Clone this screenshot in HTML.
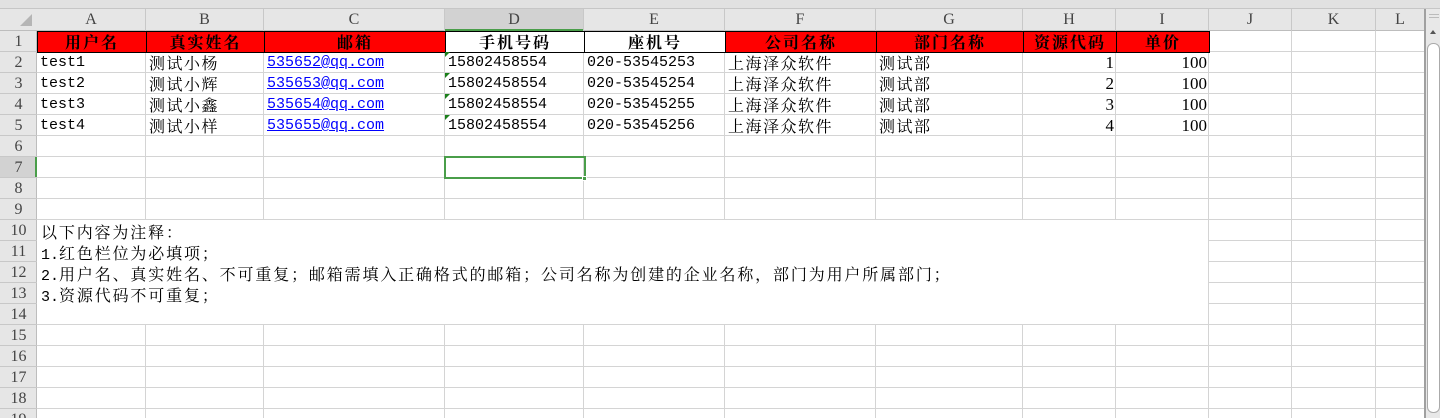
<!DOCTYPE html>
<html><head><meta charset="utf-8">
<style>
body{margin:0;width:1440px;height:418px;overflow:hidden;background:#fff;position:relative;font-family:"Liberation Mono","Noto Serif CJK SC",monospace;font-size:15px;color:#000}
div{position:absolute;box-sizing:border-box}
.t{white-space:nowrap;line-height:21px;height:21px}
.c{font-family:"Noto Serif CJK SC",serif;font-size:16px;letter-spacing:1.5px}
.n .c{letter-spacing:1.85px}
</style></head><body>
<div style="left:0;top:0;width:1440px;height:9px;background:#e1e1e1;border-bottom:1px solid #c6c6c6"></div>
<div id="g" style="left:0;top:0;width:1440px;height:418px;overflow:hidden"></div>
<script>
const g=document.getElementById('g');
function add(s,h){const d=document.createElement('div');d.style.cssText=s;if(h!==undefined)d.innerHTML=h;g.appendChild(d);return d;}
function cj(s){return String(s).replace(/([\u3000-\u9fff\uff00-\uffef]+)/g,'<span class="c">$1</span>');}
const cols=[37,146,264,445,584,725,876,1023,1116,1209,1292,1376,1425];
const letters=['A','B','C','D','E','F','G','H','I','J','K','L'];
const HT=9,RT=31,RH=21;
add(`left:0;top:${HT}px;width:1425px;height:${RT-HT}px;background:#e6e6e6;border-bottom:1px solid #bdbdbd`);
add(`left:0;top:${RT}px;width:37px;height:${418-RT}px;background:#e6e6e6;border-right:1px solid #bdbdbd`);
add(`left:445px;top:${HT}px;width:139px;height:${RT-HT}px;background:#d2d2d2;border-bottom:2px solid #4a9e4a`);
add(`left:0;top:${RT+RH*6}px;width:37px;height:21px;background:#d2d2d2;border-right:2px solid #4a9e4a`);
add(`left:20px;top:14px;width:0;height:0;border-left:12px solid transparent;border-bottom:12px solid #b5b5b5`);
for(let i=0;i<12;i++){const l=cols[i],w=cols[i+1]-cols[i];
 add(`left:${l}px;top:${HT}px;width:${w}px;height:${RT-HT}px;border-right:1px solid #c8c8c8;text-align:center;line-height:22px;font-family:'Liberation Serif',serif;font-size:16px;color:#444`,letters[i]);}
for(let r=1;r<=19;r++){const y=RT+(r-1)*RH;
 add(`left:0;top:${y}px;width:37px;height:21px;border-bottom:1px solid #c8c8c8;text-align:center;line-height:22px;font-family:'Liberation Serif',serif;font-size:16px;color:#444`,r);
 if(r>=10&&r<=13) add(`left:1209px;top:${y+20}px;width:216px;height:1px;background:#d4d4d4`);
 else add(`left:37px;top:${y+20}px;width:1388px;height:1px;background:#d4d4d4`);}
for(let i=1;i<cols.length;i++){const x=cols[i]-1;
 if(i<9){add(`left:${x}px;top:${RT}px;width:1px;height:${RH*9}px;background:#d4d4d4`);add(`left:${x}px;top:${RT+RH*14}px;width:1px;height:${418-RT-RH*14}px;background:#d4d4d4`);}
 else add(`left:${x}px;top:${RT}px;width:1px;height:${418-RT}px;background:#d4d4d4`);}
const hdr=['用户名','真实姓名','邮箱','手机号码','座机号','公司名称','部门名称','资源代码','单价'];
for(let i=0;i<9;i++){const l=cols[i],w=cols[i+1]-cols[i];const red=!(i==3||i==4);
 add(`left:${l}px;top:${RT}px;width:${w+1}px;height:22px;background:${red?'#ff0000':'#fff'};border:1px solid #000;text-align:center;line-height:20px;font-weight:bold;font-family:'Noto Serif CJK SC',serif;font-size:16px;letter-spacing:2px`,hdr[i]);}
const data=[['test1','测试小杨','535652@qq.com','15802458554','020-53545253','上海泽众软件','测试部','1','100'],
['test2','测试小辉','535653@qq.com','15802458554','020-53545254','上海泽众软件','测试部','2','100'],
['test3','测试小鑫','535654@qq.com','15802458554','020-53545255','上海泽众软件','测试部','3','100'],
['test4','测试小样','535655@qq.com','15802458554','020-53545256','上海泽众软件','测试部','4','100']];
data.forEach((row,ri)=>{const y=RT+RH*(ri+1);
 row.forEach((v,ci)=>{const l=cols[ci],w=cols[ci+1]-cols[ci];let st=`left:${l+3}px;top:${y}px;width:${w-5}px;`;
  if(ci>=7) st+='text-align:right;font-family:"Liberation Serif",serif;font-size:17px;';
  if(ci==2) st+='color:#0000ff;text-decoration:underline;';
  add(st,cj(v)).className='t';});
 add(`left:445px;top:${y}px;width:0;height:0;border-top:5px solid #1a7f1a;border-right:5px solid transparent`);});
const notes=['以下内容为注释：','1.红色栏位为必填项；','2.用户名、真实姓名、不可重复；邮箱需填入正确格式的邮箱；公司名称为创建的企业名称，部门为用户所属部门；','3.资源代码不可重复；'];
notes.forEach((n,i)=>{add(`left:41px;top:${RT+RH*(9+i)+1}px;`,cj(n)).className='t n';});
add(`left:444px;top:${RT+RH*6-1}px;width:142px;height:23px;border:2px solid #4a9e4a`);
add(`left:582px;top:${RT+RH*6+19}px;width:5px;height:5px;background:#4a9e4a;border:1px solid #fff`);
add(`left:1424px;top:9px;width:16px;height:409px;background:#e8e8e8;border-left:2px solid #a0a0a0`);
add(`left:1429px;top:14px;width:10px;height:1px;background:#bbb`);
add(`left:1429px;top:17px;width:10px;height:1px;background:#bbb`);
add(`left:1430px;top:30px;width:0;height:0;border-left:3px solid transparent;border-right:3px solid transparent;border-bottom:4px solid #555`);
add(`left:1427px;top:43px;width:13px;height:370px;background:#fff;border:1px solid #aaa;border-radius:6px`);
</script>
</body></html>
